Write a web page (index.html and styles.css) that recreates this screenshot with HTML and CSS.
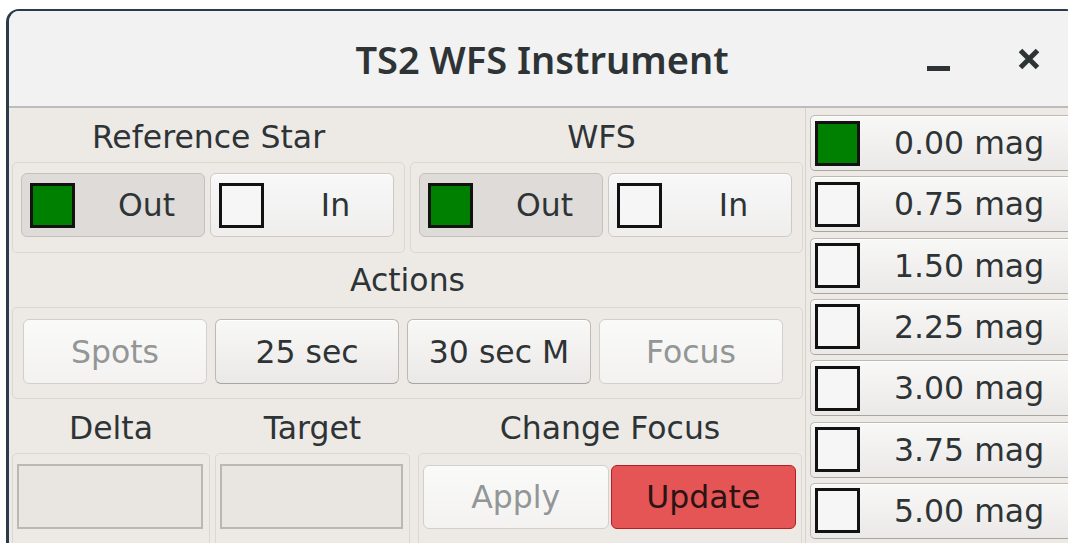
FILE: index.html
```html
<!DOCTYPE html>
<html lang="en">
<head>
<meta charset="utf-8">
<title>TS2 WFS Instrument</title>
<link rel="stylesheet" href="styles.css">
</head>
<body>
<div class="window">
  <header class="titlebar">
    <div class="tb-side"></div>
    <h1 class="title">TS2 WFS Instrument</h1>
    <div class="tb-side tb-controls">
      <span class="tb-min"><span class="tb-min-bar"></span></span>
      <svg class="tb-close" viewBox="0 0 24 24" aria-label="Close">
        <path d="M3.5 3.5 L20.5 20.5 M20.5 3.5 L3.5 20.5"/>
      </svg>
    </div>
  </header>

  <div class="content">
    <main class="panel">
      <div class="row">
        <div class="caption w-half">Reference Star</div>
        <div class="caption w-half">WFS</div>
      </div>
      <div class="row gap5">
        <div class="frame pair w-half">
          <button class="btn toggle active"><span class="led on"></span><span class="txt">Out</span></button>
          <button class="btn toggle"><span class="led"></span><span class="txt">In</span></button>
        </div>
        <div class="frame pair w-half">
          <button class="btn toggle active"><span class="led on"></span><span class="txt">Out</span></button>
          <button class="btn toggle"><span class="led"></span><span class="txt">In</span></button>
        </div>
      </div>

      <div class="caption section">Actions</div>
      <div class="frame actions">
        <button class="btn" disabled>Spots</button>
        <button class="btn">25 sec</button>
        <button class="btn">30 sec M</button>
        <button class="btn" disabled>Focus</button>
      </div>

      <div class="row">
        <div class="caption w-delta">Delta</div>
        <div class="caption w-target">Target</div>
        <div class="caption w-focus">Change Focus</div>
      </div>
      <div class="row">
        <div class="frame field w-delta"><div class="entry"></div></div>
        <div class="frame field w-target"><div class="entry"></div></div>
        <div class="frame change w-focus">
          <button class="btn" disabled>Apply</button>
          <button class="btn danger">Update</button>
        </div>
      </div>
    </main>

    <aside class="mags">
      <button class="btn mag"><span class="led on"></span><span class="txt">0.00 mag</span></button>
      <button class="btn mag"><span class="led"></span><span class="txt">0.75 mag</span></button>
      <button class="btn mag"><span class="led"></span><span class="txt">1.50 mag</span></button>
      <button class="btn mag"><span class="led"></span><span class="txt">2.25 mag</span></button>
      <button class="btn mag"><span class="led"></span><span class="txt">3.00 mag</span></button>
      <button class="btn mag"><span class="led"></span><span class="txt">3.75 mag</span></button>
      <button class="btn mag"><span class="led"></span><span class="txt">5.00 mag</span></button>
    </aside>
  </div>
</div>
</body>
</html>
```

FILE: styles.css
```css
html, body {
  margin: 0;
  padding: 0;
  background: #ffffff;
  overflow: hidden;
}

body {
  font-family: "DejaVu Sans", "Liberation Sans", sans-serif;
  font-size: 31.5px;
  color: #2e3436;
}

/* ---- window frame ---- */
.window {
  margin: 9px 0 0 6px;
  width: 1070px;
  border-left: 3px solid #2c3a4c;
  border-top: 2px solid #2c3a4c;
  border-radius: 13px 13px 0 0;
  overflow: hidden;
  background: #edeae6;
}

/* ---- header bar ---- */
.titlebar {
  height: 95px;
  display: grid;
  grid-template-columns: 1fr auto 1fr;
  align-items: center;
  background: #f2f2f2;
  border-bottom: 2px solid #bcbcbc;
}

.title {
  margin: 0 0 0 -4px;
  font-family: "Noto Sans", "DejaVu Sans", sans-serif;
  font-weight: 600;
  font-size: 38px;
  color: #2e3436;
}

.tb-controls {
  display: flex;
  justify-content: flex-end;
  align-items: center;
  gap: 67px;
  padding-right: 38px;
}

.tb-min {
  width: 23px;
  height: 24px;
  display: flex;
  align-items: flex-end;
}

.tb-min-bar {
  width: 23px;
  height: 5px;
  background: #2e3436;
  margin-bottom: 0;
}

.tb-close {
  width: 24px;
  height: 24px;
  fill: none;
  stroke: #2e3436;
  stroke-width: 5;
  stroke-linecap: butt;
}

/* ---- content ---- */
.content {
  display: flex;
  align-items: flex-start;
}

.panel {
  width: 796px;
  padding-left: 3px;
  box-sizing: border-box;
  display: flex;
  flex-direction: column;
}

.row {
  display: flex;
}

.gap5 { gap: 5px; }

.w-half { width: 393px; }
.w-delta { width: 198px; margin-right: 5px; }
.w-target { width: 195px; margin-right: 8px; }
.w-focus { width: 384px; }

.caption {
  height: 54px;
  line-height: 54px;
  text-align: center;
  white-space: nowrap;
  box-sizing: border-box;
  padding-top: 2px;
}

.caption.section {
  width: 791px;
  padding-top: 0;
}

.frame {
  border: 1px solid #dbd7d3;
  border-radius: 5px;
  box-sizing: border-box;
}

.pair {
  height: 91px;
  padding: 10px 10px 15px 8px;
  display: flex;
  gap: 5px;
}

.actions {
  width: 791px;
  height: 92px;
  padding: 11px 19px 14px 10px;
  display: flex;
  gap: 8px;
}

.field {
  height: 95px;
  padding: 10px 6px 0 4px;
}

.entry {
  height: 65px;
  box-sizing: border-box;
  border: 2px solid #bbb7b3;
  background: #e9e6e2;
}

.change {
  height: 95px;
  padding: 11px 5px 0 4px;
  display: flex;
  gap: 2px;
}

.change .btn { height: 64px; }

/* ---- buttons ---- */
.btn {
  flex: 1;
  min-width: 0;
  margin: 0;
  padding: 0;
  font: inherit;
  color: #2e3436;
  border: 1px solid #bdb9b4;
  border-bottom-color: #a9a5a0;
  border-radius: 6px;
  background: linear-gradient(#f8f8f7, #ebe9e7);
  box-shadow: inset 0 1px 0 rgba(255, 255, 255, 0.8);
  box-sizing: border-box;
  white-space: nowrap;
}

.btn:disabled {
  color: #929696;
  border-color: #d3cfcb;
  background: linear-gradient(#fafaf9, #f3f2f1);
  box-shadow: none;
}

.btn.danger {
  color: #2a1414;
  border-color: #b51e22;
  background: #e65555;
  box-shadow: none;
}

.toggle {
  height: 64px;
  display: flex;
  align-items: center;
  padding: 0 6px 0 8px;
  border-color: #cdc9c5;
  background: linear-gradient(#f8f8f8, #efeeed);
}

.toggle.active {
  background: #dedbd8;
  border-color: #c4c0bc;
  box-shadow: none;
}

.toggle .txt {
  flex: 1;
  margin-left: 20px;
  text-align: center;
}

.led {
  flex: none;
  width: 45px;
  height: 45px;
  box-sizing: border-box;
  border: 3px solid #121212;
  background: #f6f6f6;
}

.led.on {
  background: #008000;
}

.actions .btn { height: 65px; }

/* ---- magnitude column ---- */
.mags {
  flex: 1;
  align-self: stretch;
  border-left: 1px solid #d6d2ce;
  padding: 7px 0 0 4px;
  display: flex;
  flex-direction: column;
  gap: 5.33px;
  height: 440px;
}

.mag {
  flex: none;
  height: 56px;
  display: flex;
  align-items: center;
  padding: 0 0 0 4px;
  border-radius: 5px 0 0 5px;
  border-right: none;
}

.mag .txt {
  margin-left: 34px;
}
```
